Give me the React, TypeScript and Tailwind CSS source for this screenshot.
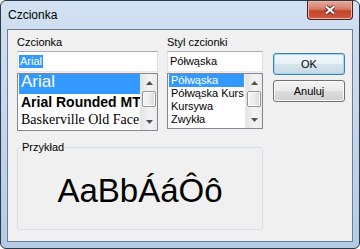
import type { FC, ReactNode } from "react";

const ui = "font-['Liberation_Sans',Arial,sans-serif]";

const Arrow: FC<{ up?: boolean }> = ({ up }) => (
  <svg width="7" height="4" viewBox="0 0 7 4">
    <path d={up ? "M0 4 L3.5 0 L7 4Z" : "M0 0 L3.5 4 L7 0Z"} fill="#505050" />
  </svg>
);

const ScrollBar: FC = () => (
  <div className="w-[17px] h-full flex flex-col bg-gradient-to-r from-[#e4e4e4] via-[#f3f3f3] to-[#ebebeb] border-l border-[#e9e9e9]">
    <div className="h-[17px] flex items-center justify-center">
      <Arrow up />
    </div>
    <div className="mx-[1px] h-[16px] rounded-[2px] border border-[#959595] bg-gradient-to-r from-[#f6f6f6] via-[#ececec] to-[#d9d9d9] shadow-[inset_0_0_0_1px_#fbfbfb]" />
    <div className="flex-1" />
    <div className="h-[17px] flex items-center justify-center">
      <Arrow />
    </div>
  </div>
);

const Label: FC<{ children: ReactNode }> = ({ children }) => (
  <div className="h-[13px] leading-[13px] text-[11px] text-black">{children}</div>
);

const Button: FC<{ children: ReactNode; primary?: boolean }> = ({ children, primary }) => (
  <div
    className={
      primary
        ? "h-[22px] w-[72px] rounded-[3px] border border-[#3c7fb1] bg-[linear-gradient(#f0f7fb,#e8f1f7_50%,#d7e5ee_50%,#c8d9e4)] shadow-[inset_0_0_0_1px_#9ed9f6] flex items-center justify-center text-[11px] text-black"
        : "h-[22px] w-[72px] rounded-[3px] border border-[#707070] bg-[linear-gradient(#f2f2f2,#ebebeb_50%,#dddddd_50%,#cfcfcf)] shadow-[inset_0_0_0_1px_#fcfcfc] flex items-center justify-center text-[11px] text-black"
    }
  >
    {children}
  </div>
);

const App: FC = () => {
  return (
    <div className={`w-[360px] h-[249px] bg-white ${ui}`}>
      <div className="h-full rounded-[6px] border border-[#2e3945] bg-gradient-to-b from-[#d2e1f2] via-[#c3d6ed] to-[#b3cbe7] flex flex-col overflow-hidden">
        {/* title bar */}
        <div className="h-[28px] flex items-start">
          <span className="pl-[7px] pt-[6px] text-[12px] leading-[16px] text-black">Czcionka</span>
          <div className="ml-auto mr-[6px] w-[46px] h-[19px] rounded-b-[4px] border border-t-0 border-[#4b2119] bg-[linear-gradient(#e9a89a,#d77d6b_45%,#c4442d_55%,#cf5a3e)] shadow-[inset_0_0_0_1px_#eab3a6] flex items-center justify-center">
            <svg width="12" height="10" viewBox="0 0 12 10">
              <path d="M2 1.5 L10 8.5 M10 1.5 L2 8.5" stroke="#5a2a22" strokeWidth="3.8" />
              <path d="M2 1.5 L10 8.5 M10 1.5 L2 8.5" stroke="#ffffff" strokeWidth="2" />
            </svg>
          </div>
        </div>

        {/* client area */}
        <div className="mx-[6px] flex-1 border border-[#6d7f94] bg-[#f0f0f0] pl-[9px] pr-[7px] pt-[6px]">
          <div className="flex items-start">
            {/* font column */}
            <div className="w-[141px] flex flex-col">
              <Label>Czcionka</Label>
              <div className="mt-[2px] h-[21px] border border-[#abadb3] border-l-[#e2e3ea] border-r-[#dbdfe6] border-b-[#e3e9ef] bg-white flex items-center pl-[1px]">
                <span className="bg-[#3399ff] text-white text-[11px] leading-[13px] px-[1px]">Arial</span>
              </div>
              <div className="mt-[1px] h-[58px] border border-[#828790] bg-white flex pl-[1px]">
                <div className="flex-1 overflow-hidden whitespace-nowrap">
                  <div className="h-[20px] bg-[#3399ff] text-white pl-[2px] text-[17px] leading-[15px]">Arial</div>
                  <div className="h-[19px] text-black pl-[2px] text-[14px] leading-[16px] font-bold">Arial Rounded MT Bold</div>
                  <div className="h-[18px] text-black pl-[2px] text-[14px] leading-[14px] font-['Liberation_Serif',serif]">Baskerville Old Face</div>
                </div>
                <ScrollBar />
              </div>
            </div>

            {/* style column */}
            <div className="ml-[9px] w-[96px] flex flex-col">
              <Label>Styl czcionki</Label>
              <div className="mt-[2px] h-[21px] border border-[#abadb3] border-l-[#e2e3ea] border-r-[#dbdfe6] border-b-[#e3e9ef] bg-white flex items-center pl-[2px]">
                <span className="text-black text-[11px] leading-[13px]">Półwąska</span>
              </div>
              <div className="mt-[1px] h-[56px] border border-[#828790] bg-white flex pl-[1px]">
                <div className="flex-1 overflow-hidden whitespace-nowrap text-[11px] leading-[13px] text-black">
                  <div className="h-[13px] bg-[#3399ff] text-white pl-[2px]">Półwąska</div>
                  <div className="h-[13px] pl-[2px]">Półwąska Kursywa</div>
                  <div className="h-[13px] pl-[2px]">Kursywa</div>
                  <div className="h-[13px] pl-[2px]">Zwykła</div>
                </div>
                <div className="ml-[1px] h-full">
                  <ScrollBar />
                </div>
              </div>
            </div>

            {/* buttons */}
            <div className="ml-[10px] mt-[17px] flex flex-col gap-[5px]">
              <Button primary>OK</Button>
              <Button>Anuluj</Button>
            </div>
          </div>

          {/* sample group */}
          <fieldset className="mt-[10px] w-[246px] h-[89px] border border-[#d5dfe5] rounded-[3px]">
            <legend className="ml-[3px] px-[1px] text-[11px] leading-[13px] text-black">Przykład</legend>
            <div className="pt-[20px] text-center text-[33px] leading-none text-black font-['Liberation_Sans',Arial,sans-serif]">
              AaBbÁáÔô
            </div>
          </fieldset>
        </div>
        <div className="h-[6px]" />
      </div>
    </div>
  );
};

export default App;
